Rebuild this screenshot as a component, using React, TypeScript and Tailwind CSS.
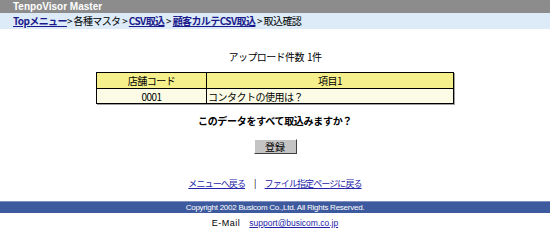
import React from "react";

export default function App() {
  const jp = { fontFamily: '"Noto Sans CJK JP", "Noto Sans", sans-serif' };
  return (
    <div className="w-[550px] h-[246px] bg-white overflow-hidden text-black" style={jp}>
      <div className="h-[13px] bg-[#8c8c8c] pl-[13px] text-white font-bold text-[10px] leading-[13px]" style={{ fontFamily: '"Liberation Sans", sans-serif' }}>
        TenpoVisor Master
      </div>
      <div className="h-[16px] bg-[#dcebf7] pl-[13px] text-[10px] leading-[16px] whitespace-nowrap tracking-[-0.6px]">
        <a className="text-[#1a1a8c] underline font-bold">Topメニュー</a>
        <span>&gt;&nbsp;各種マスタ&nbsp;&gt;&nbsp;</span>
        <a className="text-[#1a1a8c] underline font-bold">CSV取込</a>
        <span>&nbsp;&gt;&nbsp;</span>
        <a className="text-[#1a1a8c] underline font-bold">顧客カルテCSV取込</a>
        <span>&nbsp;&gt;&nbsp;取込確認</span>
      </div>
      <div className="flex flex-col items-center">
        <div className="mt-[22px] h-[12px] text-[10px] leading-[12px] tracking-[-0.6px]">アップロード件数&nbsp;&nbsp;1件</div>
        <div className="mt-[9px] shadow-[1px_1px_0_#a0a0a0]">
          <table className="w-[358px] border-collapse border border-black text-[10px] tracking-[-0.5px]">
            <tbody>
              <tr className="h-[16px] bg-[#f6f08c]">
                <td className="w-[110px] border border-black text-center leading-[14px] p-0">店舗コード</td>
                <td className="border border-black text-center leading-[14px] p-0">項目1</td>
              </tr>
              <tr className="h-[15px] bg-[#fcfce6]">
                <td className="border border-black text-center leading-[13px] p-0">0001</td>
                <td className="border border-black text-left leading-[13px] p-0 pl-[1px]">コンタクトの使用は？</td>
              </tr>
            </tbody>
          </table>
        </div>
        <div className="mt-[11px] h-[12px] text-[10px] leading-[12px] font-bold tracking-[-0.3px]">このデータをすべて取込みますか？</div>
        <button className="mt-[12px] w-[43px] h-[15px] bg-[#c4c4c4] text-[10px] leading-[13px] border border-t-white border-l-white border-r-[#404040] border-b-[#404040] p-0">
          登録
        </button>
        <div className="mt-[24px] h-[12px] text-[9px] leading-[12px] whitespace-nowrap tracking-[-0.9px]">
          <a className="text-[#2424a8] underline">メニューへ戻る</a>
          <span className="mx-[9px]">|</span>
          <a className="text-[#2424a8] underline">ファイル指定ページに戻る</a>
        </div>
      </div>
      <div className="mt-[11px] h-[12px] bg-[#3d5a9e] text-white text-[8px] leading-[11px] text-center border-t border-[#7f8fbf] tracking-[-0.25px]" style={{ fontFamily: '"Liberation Sans", sans-serif' }}>
        Copyright 2002 Busicom Co.,Ltd. All Rights Reserved.
      </div>
      <div className="h-[16px] leading-[16px] text-center whitespace-nowrap" style={{ fontFamily: '"Liberation Sans", sans-serif' }}>
        <span className="mr-[9px] text-[9px] tracking-[0.5px]">E-Mail</span>
        <a className="text-[#2424a8] underline text-[8.5px]">support@busicom.co.jp</a>
      </div>
    </div>
  );
}
